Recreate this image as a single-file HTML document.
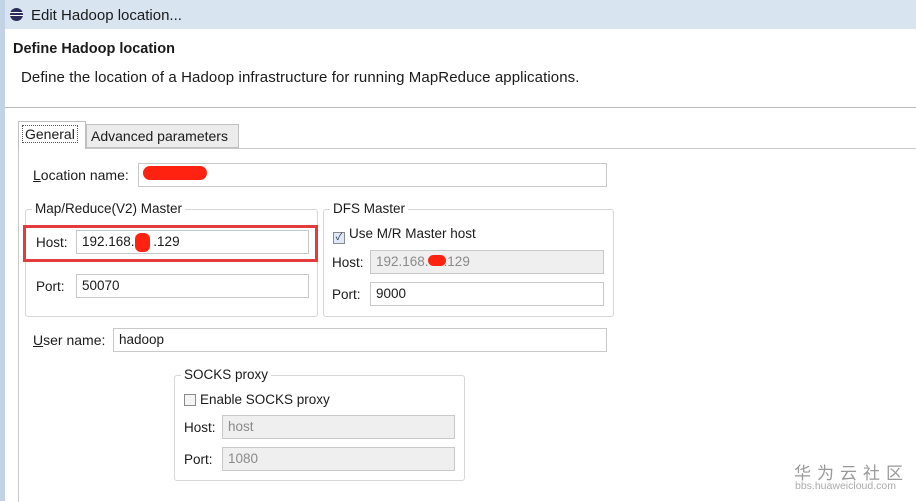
<!DOCTYPE html>
<html><head><style>
body{margin:0;width:916px;height:501px;overflow:hidden;background:#fff;font-family:"Liberation Sans","Noto Sans CJK SC",sans-serif;font-size:13.5px;color:#1a1a1a;position:relative}
.a{position:absolute}
.in{position:absolute;background:#fff;border:1px solid #c8c8c8;height:24px;box-sizing:border-box;padding:3px 5px;font-size:13.5px}
.dis{background:#efefef;color:#8a8a8a}
.grp{position:absolute;border:1px solid #d6d6d6;border-radius:3px}
.gl{position:absolute;background:#fff;padding:0 3px;top:-9px;left:6px}
.cb{display:inline-block;width:12px;height:12px;border:1px solid #8a8a8a;box-sizing:border-box;vertical-align:-2px;margin-right:4px;background:#f4f4f4}
</style></head><body>
<div class="a" style="left:0;top:0;width:916px;height:29px;background:#d9e4f1"></div>
<div class="a" style="left:0;top:0;width:5px;height:501px;background:#c3d3e6"></div>
<div class="a" style="left:10px;top:8px;width:13px;height:13px;border-radius:50%;background:#2c2c5a"></div>
<div class="a" style="left:10px;top:12px;width:13px;height:1px;background:#fff"></div>
<div class="a" style="left:10px;top:15px;width:13px;height:1px;background:#fff"></div>
<div class="a" style="left:31px;top:7px;font-size:15px">Edit Hadoop location...</div>
<div class="a" style="left:5px;top:29px;width:911px;height:79px;background:#fff"></div>
<div class="a" style="left:13px;top:41px;font-weight:bold;font-size:14.5px">Define Hadoop location</div>
<div class="a" style="left:21px;top:69px;font-size:15px;letter-spacing:0.1px">Define the location of a Hadoop infrastructure for running MapReduce applications.</div>
<div class="a" style="left:5px;top:107px;width:911px;height:1px;background:#b8b8b8"></div>
<div class="a" style="left:18px;top:148px;width:898px;height:353px;border-left:1px solid #c8c8c8;border-top:1px solid #c8c8c8"></div>
<div class="a" style="left:86px;top:124px;width:153px;height:24px;border:1px solid #c0c0c0;background:#ececec;box-sizing:border-box;padding:3px 4px;font-size:14px">Advanced parameters</div>
<div class="a" style="left:18px;top:121px;width:68px;height:28px;border:1px solid #c0c0c0;border-bottom:none;background:#fff;box-sizing:border-box;padding:4px 3px;font-size:14px"><span style="border:1px dotted #555;padding:0 2px">General</span></div>
<div class="a" style="left:33px;top:167px;font-size:14px"><u>L</u>ocation name:</div>
<div class="in" style="left:138px;top:163px;width:469px"></div>
<div class="a" style="left:143px;top:166px;width:64px;height:14px;background:#f21;border-radius:7px"></div>
<div class="grp" style="left:25px;top:209px;width:291px;height:106px"><div class="gl">Map/Reduce(V2) Master</div></div>
<div class="a" style="left:23px;top:225px;width:295px;height:37px;border:3px solid #e43b3b;box-sizing:border-box"></div>
<div class="a" style="left:36px;top:235px">Host:</div>
<div class="in" style="left:76px;top:230px;width:233px">192.168.&nbsp;&nbsp;&nbsp;&nbsp;&nbsp;.129</div>
<div class="a" style="left:135px;top:233px;width:15px;height:19px;background:#f21;border-radius:6px"></div>
<div class="a" style="left:36px;top:279px">Port:</div>
<div class="in" style="left:76px;top:274px;width:233px">50070</div>
<div class="grp" style="left:323px;top:209px;width:289px;height:106px"><div class="gl">DFS Master</div></div>
<div class="a" style="left:333px;top:226px"><span class="cb" style="background:#dfe8f6;color:#234;font-size:10px;line-height:10px;text-align:center">✓</span>Use M/R Master host</div>
<div class="a" style="left:332px;top:255px">Host:</div>
<div class="in dis" style="left:370px;top:250px;width:234px">192.168.&nbsp;&nbsp;&nbsp;&nbsp;.129</div>
<div class="a" style="left:428px;top:255px;width:18px;height:11px;background:#f21;border-radius:6px"></div>
<div class="a" style="left:332px;top:287px">Port:</div>
<div class="in" style="left:370px;top:282px;width:234px">9000</div>
<div class="a" style="left:33px;top:332px;font-size:14px"><u>U</u>ser name:</div>
<div class="in" style="left:113px;top:328px;width:494px">hadoop</div>
<div class="grp" style="left:174px;top:375px;width:289px;height:104px"><div class="gl">SOCKS proxy</div></div>
<div class="a" style="left:184px;top:392px"><span class="cb"></span>Enable SOCKS proxy</div>
<div class="a" style="left:184px;top:420px">Host:</div>
<div class="in dis" style="left:222px;top:415px;width:233px">host</div>
<div class="a" style="left:184px;top:452px">Port:</div>
<div class="in dis" style="left:222px;top:447px;width:233px">1080</div>
<div class="a" style="left:794px;top:459px;font-size:17px;color:#999;letter-spacing:6px">华为云社区</div>
<div class="a" style="left:795px;top:480px;font-size:10.5px;color:#aaa">bbs.huaweicloud.com</div>
</body></html>
